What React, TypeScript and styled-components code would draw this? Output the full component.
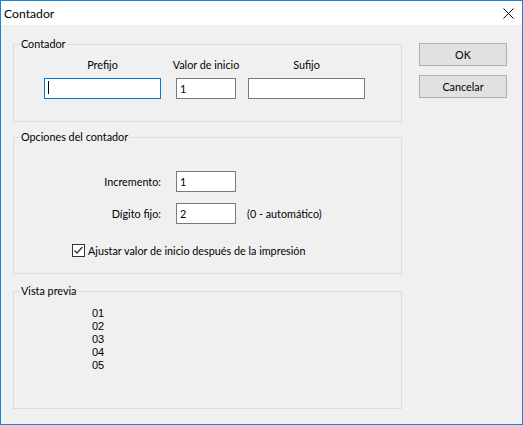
import React from 'react';
import styled, { createGlobalStyle } from 'styled-components';

const GlobalStyle = createGlobalStyle`
  html, body {
    margin: 0;
    padding: 0;
    background: #ffffff;
  }
  * {
    box-sizing: border-box;
  }
`;

const uiFont = `"Lato", "Liberation Sans", sans-serif`;

const Window = styled.div`
  width: 523px;
  height: 425px;
  border: 1px solid #1883d7;
  background: #f0f0f0;
  display: flex;
  flex-direction: column;
  font-family: ${uiFont};
  font-size: 10.8px;
  color: #000;
`;

const TitleBar = styled.header`
  height: 24px;
  background: #ffffff;
  display: flex;
  align-items: center;
  justify-content: space-between;
  padding-left: 3px;
`;

const Title = styled.span`
  font-size: 12.2px;
`;

const CloseButton = styled.button`
  width: 28px;
  height: 24px;
  border: none;
  background: transparent;
  padding: 0;
  display: flex;
  align-items: center;
  justify-content: center;
  margin-top: 1px;
`;

const Body = styled.main`
  flex: 1;
  display: flex;
  gap: 17px;
  padding: 11px 15px 15px 12px;
`;

const LeftColumn = styled.div`
  width: 389px;
  display: flex;
  flex-direction: column;
`;

const GroupBox = styled.fieldset<{ $grow?: boolean; $gapTop?: number }>`
  margin: ${p => p.$gapTop ?? 0}px 0 0 0;
  padding: 0;
  border: 1px solid #dcdcdc;
  min-width: 0;
  flex: ${p => (p.$grow ? 1 : 'none')};
`;

const Legend = styled.legend`
  margin-left: 6px;
  padding: 0 1px;
  line-height: 16px;
`;

/* first column is 3px wider so the gaps read 15px / 12px like the dialog */
const CounterGrid = styled.div`
  display: grid;
  grid-template-columns: 120px 60px 117px;
  grid-template-rows: 16px 21px;
  column-gap: 12px;
  row-gap: 5px;
  padding: 5px 0 22px 30px;
`;

const ColumnLabel = styled.span<{ $lead?: boolean }>`
  display: flex;
  justify-content: center;
  white-space: nowrap;
  line-height: 16px;
  padding-right: ${p => (p.$lead ? 3 : 0)}px;
`;

const FieldWrap = styled.div<{ $lead?: boolean }>`
  position: relative;
  height: 21px;
  padding-right: ${p => (p.$lead ? 3 : 0)}px;
`;

const OptionsGrid = styled.div`
  display: grid;
  grid-template-columns: 147px 60px auto;
  grid-auto-rows: 21px;
  column-gap: 15px;
  row-gap: 11px;
  align-items: center;
  padding: 26px 0 17px 0;
`;

const FieldLabel = styled.span`
  justify-self: end;
`;

const Hint = styled.span`
  margin-left: -4px;
`;

const TextBox = styled.input<{ $focused?: boolean }>`
  display: block;
  width: 100%;
  height: 21px;
  margin: 0;
  padding: 0 3px;
  border: 1px solid ${p => (p.$focused ? '#0078d7' : '#7a7a7a')};
  background: #ffffff;
  font-family: ${uiFont};
  font-size: 10.8px;
  color: #000;
  outline: none;
  caret-color: transparent;
`;

const Caret = styled.span`
  position: absolute;
  left: 4px;
  top: 3px;
  width: 1px;
  height: 13px;
  background: #000;
`;

const CheckRow = styled.label`
  grid-column: 1 / -1;
  display: flex;
  align-items: center;
  gap: 3px;
  padding-left: 58px;
  margin-top: 9px;
  height: 16px;
`;

const CheckBox = styled.span`
  width: 13px;
  height: 13px;
  border: 1px solid #333333;
  background: #ffffff;
  display: flex;
  align-items: center;
  justify-content: center;
`;

const PreviewList = styled.div`
  padding: 8px 0 0 78px;
  font-family: "Liberation Sans", Arial, sans-serif;
  font-size: 11px;
  line-height: 13px;
  color: #000;
`;

const ButtonColumn = styled.div`
  display: flex;
  flex-direction: column;
  gap: 9px;
  padding-top: 7px;
`;

const DialogButton = styled.button`
  width: 88px;
  height: 23px;
  border: 1px solid #adadad;
  background: #e1e1e1;
  font-family: ${uiFont};
  font-size: 10.8px;
  color: #000;
  padding: 0;
`;

const CloseIcon = () => (
  <svg width="11" height="11" viewBox="0 0 11 11">
    <path d="M0.5 0.5 L10.5 10.5 M10.5 0.5 L0.5 10.5" stroke="#000" strokeWidth="1" fill="none" />
  </svg>
);

const CheckMark = () => (
  <svg width="11" height="11" viewBox="0 0 11 11">
    <path d="M1.5 5.5 L4 8 L9.5 2" stroke="#333" strokeWidth="1.3" fill="none" />
  </svg>
);

const preview = ['01', '02', '03', '04', '05'];

export default function App() {
  return (
    <>
      <GlobalStyle />
      <Window>
        <TitleBar>
          <Title>Contador</Title>
          <CloseButton aria-label="Cerrar">
            <CloseIcon />
          </CloseButton>
        </TitleBar>
        <Body>
          <LeftColumn>
            <GroupBox>
              <Legend>Contador</Legend>
              <CounterGrid>
                <ColumnLabel $lead>Prefijo</ColumnLabel>
                <ColumnLabel>Valor de inicio</ColumnLabel>
                <ColumnLabel>Sufijo</ColumnLabel>
                <FieldWrap $lead>
                  <TextBox $focused defaultValue="" readOnly />
                  <Caret />
                </FieldWrap>
                <TextBox defaultValue="1" readOnly />
                <TextBox defaultValue="" readOnly />
              </CounterGrid>
            </GroupBox>

            <GroupBox $gapTop={7}>
              <Legend>Opciones del contador</Legend>
              <OptionsGrid>
                <FieldLabel>Incremento:</FieldLabel>
                <TextBox defaultValue="1" readOnly />
                <span />
                <FieldLabel>Dígito fijo:</FieldLabel>
                <TextBox defaultValue="2" readOnly />
                <Hint>(0 - automático)</Hint>
                <CheckRow>
                  <CheckBox>
                    <CheckMark />
                  </CheckBox>
                  Ajustar valor de inicio después de la impresión
                </CheckRow>
              </OptionsGrid>
            </GroupBox>

            <GroupBox $grow $gapTop={9}>
              <Legend>Vista previa</Legend>
              <PreviewList>
                {preview.map(n => (
                  <div key={n}>{n}</div>
                ))}
              </PreviewList>
            </GroupBox>
          </LeftColumn>

          <ButtonColumn>
            <DialogButton>OK</DialogButton>
            <DialogButton>Cancelar</DialogButton>
          </ButtonColumn>
        </Body>
      </Window>
    </>
  );
}
